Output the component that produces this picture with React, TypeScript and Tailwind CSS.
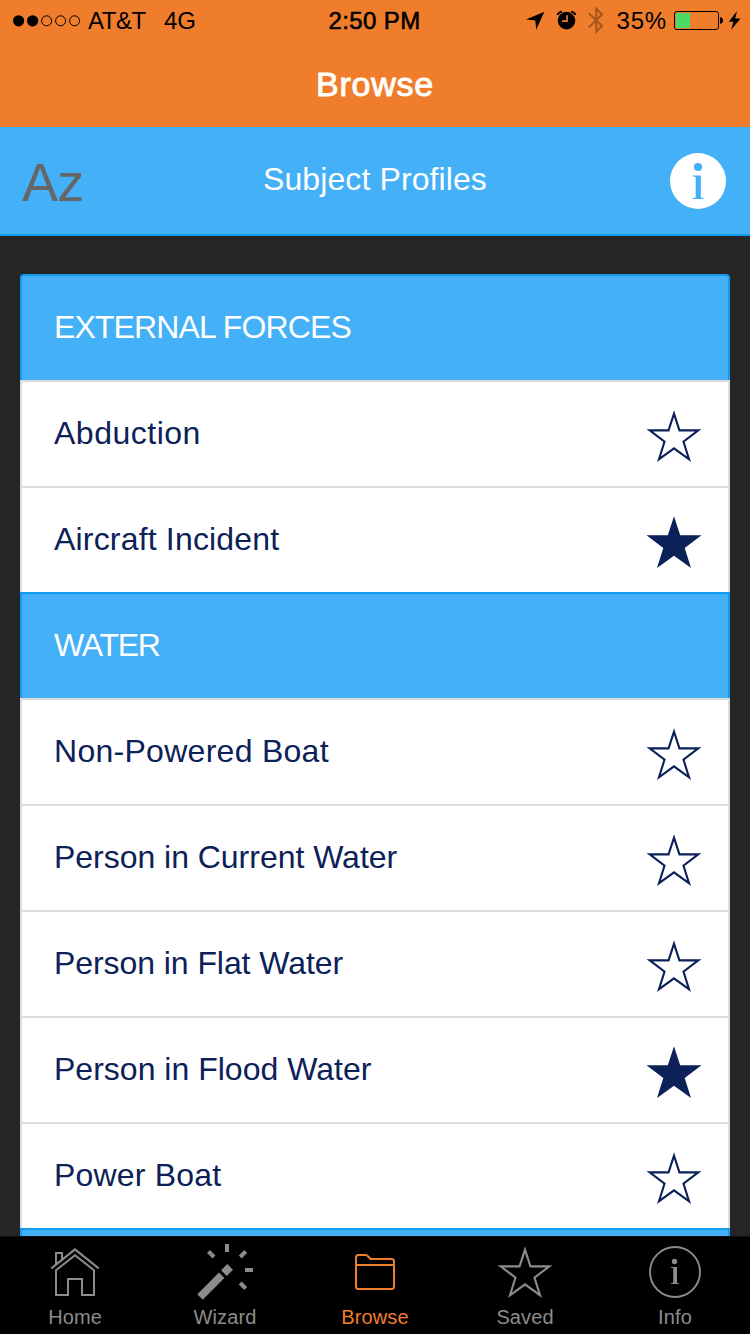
import React from "react";

const STAR =
  "28,0.3 34.2,19.3 55.5,19.3 38.7,32 45,52 28,39.7 11,52 17.3,32 0.5,19.3 21.8,19.3";

function Star({ filled = false, className = "" }: { filled?: boolean; className?: string }) {
  return (
    <svg width="56" height="53" viewBox="0 0 56 53" className={className}>
      <clipPath id="star-clip">
        <polygon points={STAR} />
      </clipPath>
      {filled ? (
        <polygon points={STAR} fill="currentColor" />
      ) : (
        <polygon
          points={STAR}
          fill="none"
          stroke="currentColor"
          strokeWidth="4.2"
          strokeMiterlimit="20"
          clipPath="url(#star-clip)"
        />
      )}
    </svg>
  );
}

function StatusBar() {
  return (
    <div className="grid h-[42px] grid-cols-[1fr_auto_1fr] items-center text-[24px] leading-none text-black">
      <div className="flex items-center pl-[13px]">
        <svg width="68" height="12" viewBox="0 0 68 12" className="mr-[7px]">
          <circle cx="5.6" cy="5.8" r="5.6" />
          <circle cx="19.6" cy="5.8" r="5.6" />
          <circle cx="33.6" cy="5.8" r="5" fill="none" stroke="black" strokeWidth="1" />
          <circle cx="47.6" cy="5.8" r="5" fill="none" stroke="black" strokeWidth="1" />
          <circle cx="61.6" cy="5.8" r="5" fill="none" stroke="black" strokeWidth="1" />
        </svg>
        <span className="w-[76px] tracking-[-0.5px]">AT&amp;T</span>
        <span>4G</span>
      </div>
      <div className="pr-px tracking-[0.4px] [-webkit-text-stroke:0.6px_black]">2:50 PM</div>
      <div className="flex items-center justify-end pr-[9px]">
        <svg width="78" height="28" viewBox="526 7 78 28" className="mr-[13px]">
          <polygon points="544.3,11.8 526,19.6 535.3,20.6 536.2,29.8" />
          <circle cx="566.5" cy="20.6" r="8.8" />
          <path d="M557.4 15Q558.5 12.2 562 11.6M575.6 15Q574.5 12.2 571 11.6" fill="none" stroke="black" strokeWidth="1.9" />
          <path d="M567 15.2V21.2H562" fill="none" stroke="#ef7d2b" strokeWidth="1.7" />
          <path d="M588.8 13.3L602 26L596.3 31.8V8.8L602 14.6L588.8 27.5" fill="none" stroke="#a4561e" strokeWidth="2.1" />
        </svg>
        <span className="mr-[7px] tracking-[0.8px]">35%</span>
        <svg width="67" height="20" viewBox="674 11 67 20">
          <rect x="674.5" y="11.5" width="44" height="18" rx="2.5" fill="none" stroke="black" strokeWidth="1" />
          <rect x="676" y="13" width="14" height="15" fill="#4cd964" />
          <path d="M720 17.2Q723 17.5 723 20.5Q723 23.5 720 23.8Z" />
          <polygon points="737,11 728.8,21.8 733.4,21.8 731.2,29.8 740.5,18.4 735.2,18.4" />
        </svg>
      </div>
    </div>
  );
}

function SubHeader() {
  return (
    <div className="grid h-[109px] shrink-0 grid-cols-[1fr_auto_1fr] items-center border-b-2 border-[#149aef] bg-[#43b0f7]">
      <div className="pl-[22px] pt-[2px] text-[54px] leading-none tracking-[-0.8px] text-[#666]">Az</div>
      <div className="pb-[4px] text-[32px] leading-none tracking-[0.1px] text-white">Subject Profiles</div>
      <svg width="56" height="56" viewBox="0 0 56 56" className="mr-6 justify-self-end">
        <circle cx="28" cy="28" r="28" fill="white" />
        <g fill="#43b0f7">
          <circle cx="28" cy="14" r="4.1" />
          <path d="M22.4 22.4H30.8V44.4L33.7 45.2V46H22.4V45.2L25.7 44.4V24L22.4 23.2Z" />
        </g>
      </svg>
    </div>
  );
}

function Section({ title, first = false, tracking = "" }: { title: string; first?: boolean; tracking?: string }) {
  return (
    <div
      className={`flex h-[106px] shrink-0 items-center border-x-2 border-t-2 border-[#149aef] bg-[#43b0f7] px-8 pb-[2px] text-[32px] leading-none text-white ${tracking} ${first ? "rounded-t-[4px]" : ""}`}
    >
      {title}
    </div>
  );
}

function Row({ label, saved = false, tracking = "" }: { label: string; saved?: boolean; tracking?: string }) {
  return (
    <div className="flex h-[106px] shrink-0 items-center justify-between border-x-2 border-t-2 border-[#dcdcdc] bg-white pl-8 pr-[26px] text-[#0b2158]">
      <span className={`pb-[2px] text-[32px] leading-none ${tracking}`}>{label}</span>
      <Star filled={saved} className="mt-[5px]" />
    </div>
  );
}

function HomeIcon() {
  return (
    <svg width="50" height="50" viewBox="50 1247 50 50" fill="none" stroke="currentColor" strokeWidth="2">
      <path d="M51.3 1268.4L75 1249.4L98.7 1268.4" />
      <path d="M56 1264V1253H62V1259" />
      <path d="M56 1270.3L75 1255.3L94 1270.3V1295H82V1279H68V1295H56Z" />
    </svg>
  );
}

function WizardIcon() {
  return (
    <svg width="58" height="58" viewBox="196 1243 58 58" fill="none" stroke="currentColor" strokeWidth="4">
      <path d="M227 1244V1252M245 1270H253M208.5 1251.5L214 1257M245.7 1251.5L240.2 1257M240.2 1283L245.7 1288.5" />
      <path d="M221.7 1275.3L200 1297" strokeWidth="7.6" />
      <path d="M223.9 1273.1L230.1 1266.9" strokeWidth="8" />
    </svg>
  );
}

function FolderIcon() {
  return (
    <svg width="42" height="38" viewBox="354 1253 42 38" fill="none" stroke="currentColor" strokeWidth="2">
      <path d="M356 1286.5V1257.5Q356 1255 358.5 1255H365.5Q367 1255 368 1256.3L370.5 1259H391.5Q394 1259 394 1261.5V1286.5Q394 1289 391.5 1289H358.5Q356 1289 356 1286.5ZM356 1265H394" />
    </svg>
  );
}

function InfoIcon() {
  return (
    <svg width="52" height="52" viewBox="0 0 52 52">
      <circle cx="26" cy="26" r="25" fill="none" stroke="currentColor" strokeWidth="1.9" />
      <circle cx="25.5" cy="15.5" r="2.7" fill="currentColor" />
      <path d="M22 21H28V36.7L30 37.2V38H22V37.2L24.2 36.7V22.3L22 21.8Z" fill="currentColor" />
    </svg>
  );
}

function Tab({ label, active = false, children }: { label: string; active?: boolean; children: React.ReactNode }) {
  return (
    <div className={`flex flex-col items-center ${active ? "text-[#ef7d2b]" : "text-[#8c8c8c]"}`}>
      <div className="flex h-[70px] items-center justify-center">{children}</div>
      <span className="text-[20px] leading-[20px] tracking-[0.1px]">{label}</span>
    </div>
  );
}

export default function App() {
  return (
    <div className="flex h-[1334px] w-[750px] flex-col overflow-hidden bg-[#252525] font-['Liberation_Sans',Arial,sans-serif]">
      <header className="h-[127px] shrink-0 bg-[#ef7d2b]">
        <StatusBar />
        <h1 className="pt-[25px] text-center text-[34px] leading-[34px] tracking-[0.8px] text-white [-webkit-text-stroke:0.9px_white]">
          Browse
        </h1>
      </header>
      <SubHeader />
      <main className="flex min-h-0 flex-1 flex-col overflow-hidden px-5 pt-[38px]">
        <Section title="EXTERNAL FORCES" first tracking="tracking-[-0.87px]" />
        <Row label="Abduction" tracking="tracking-[0.5px]" />
        <Row label="Aircraft Incident" saved tracking="tracking-[0.18px]" />
        <Section title="WATER" tracking="tracking-[-1.3px]" />
        <Row label="Non-Powered Boat" tracking="tracking-[0.28px]" />
        <Row label="Person in Current Water" tracking="tracking-[-0.03px]" />
        <Row label="Person in Flat Water" tracking="tracking-[-0.07px]" />
        <Row label="Person in Flood Water" saved tracking="tracking-[0.01px]" />
        <Row label="Power Boat" tracking="tracking-[0.2px]" />
        <Section title="" />
      </main>
      <nav className="grid h-[98px] shrink-0 grid-cols-5 border-t border-[#111] bg-black">
        <Tab label="Home">
          <HomeIcon />
        </Tab>
        <Tab label="Wizard">
          <WizardIcon />
        </Tab>
        <Tab label="Browse" active>
          <FolderIcon />
        </Tab>
        <Tab label="Saved">
          <Star />
        </Tab>
        <Tab label="Info">
          <InfoIcon />
        </Tab>
      </nav>
    </div>
  );
}
